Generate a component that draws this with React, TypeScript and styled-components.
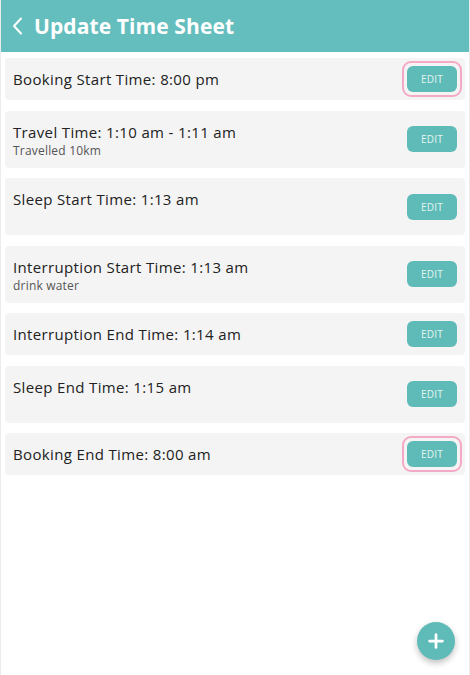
import styled, { createGlobalStyle } from "styled-components"
import { Plus } from "lucide-react"

const GlobalStyle = createGlobalStyle`
    html, body {
        margin: 0;
        padding: 0;
        background: #ffffff;
        font-family: 'Open Sans', 'Liberation Sans', sans-serif;
    }
`

const Screen = styled.div`
    position: relative;
    width: 470px;
    height: 675px;
    box-sizing: border-box;
    border-left: 1px solid #ececec;
    border-right: 1px solid #ececec;
    overflow: hidden;
`

const Header = styled.div`
    display: flex;
    align-items: center;
    gap: 11px;
    height: 52px;
    padding-left: 11px;
    background-color: #64bebd;
    color: #ffffff;
`

const HeaderTitle = styled.h1`
    margin: 0;
    font-size: 21px;
    font-weight: 700;
    letter-spacing: 0.1px;
`

const List = styled.div`
    display: flex;
    flex-direction: column;
    gap: 10.5px;
    padding: 6px 4px 0 4px;
`

const Card = styled.div`
    display: flex;
    align-items: center;
    justify-content: space-between;
    background-color: #f4f4f4;
    border-radius: 4px;
    padding: 8px 4px 8px 8px;
`

const Texts = styled.div`
    display: flex;
    flex-direction: column;
    align-self: flex-start;
    padding: 2px 0;
`

const Title = styled.div`
    font-size: 15px;
    line-height: 22px;
    letter-spacing: 0.35px;
    color: #222222;
`

const Label = styled.span`
    font-weight: 500;
`

const Sub = styled.div`
    font-size: 12px;
    line-height: 15px;
    letter-spacing: 0.2px;
    color: #555555;
    min-height: 15px;
`

const ButtonRing = styled.div<{ $ring: boolean }>`
    display: flex;
    padding: 3px;
    margin: -5px -1px -5px 0;
    border-radius: 9px;
    border: 2px solid ${p => (p.$ring ? "#f4a9c6" : "transparent")};
`

const EditButton = styled.button`
    width: 50px;
    height: 26px;
    border: none;
    border-radius: 6px;
    background-color: #5fbbb7;
    color: #e4f5f3;
    font-family: 'Open Sans', 'Liberation Sans', sans-serif;
    font-size: 10px;
    letter-spacing: 0.2px;
    padding: 0;
    cursor: pointer;
`

const Fab = styled.button`
    position: absolute;
    right: 14px;
    bottom: 15px;
    width: 38px;
    height: 38px;
    border-radius: 50%;
    border: none;
    background-color: #5fbbb7;
    color: #ffffff;
    display: flex;
    align-items: center;
    justify-content: center;
    box-shadow: 0 3px 6px rgba(0, 0, 0, 0.25);
    padding: 0;
`

type Entry = {
    label: string
    value: string
    sub?: string
    tall?: boolean
    ring?: boolean
}

const entries: Entry[] = [
    { label: "Booking Start Time:", value: "8:00 pm", ring: true },
    { label: "Travel Time:", value: "1:10 am - 1:11 am", sub: "Travelled 10km" },
    { label: "Sleep Start Time:", value: "1:13 am", tall: true },
    { label: "Interruption Start Time:", value: "1:13 am", sub: "drink water" },
    { label: "Interruption End Time:", value: "1:14 am" },
    { label: "Sleep End Time:", value: "1:15 am", tall: true },
    { label: "Booking End Time:", value: "8:00 am", ring: true },
]

const App = () => {
    return (
        <Screen>
            <GlobalStyle />
            <Header>
                <svg width="11" height="18" viewBox="0 0 11 18" fill="none">
                    <path d="M9 1.5L2 9l7 7.5" stroke="#ffffff" strokeWidth="2" strokeLinecap="round" strokeLinejoin="round" />
                </svg>
                <HeaderTitle>Update Time Sheet</HeaderTitle>
            </Header>
            <List>
                {entries.map(e => (
                    <Card key={e.label}>
                        <Texts>
                            <Title>
                                <Label>{e.label}</Label> {e.value}
                            </Title>
                            {(e.sub || e.tall) && <Sub>{e.sub}</Sub>}
                        </Texts>
                        <ButtonRing $ring={!!e.ring}>
                            <EditButton>EDIT</EditButton>
                        </ButtonRing>
                    </Card>
                ))}
            </List>
            <Fab>
                <Plus size={22} strokeWidth={3} />
            </Fab>
        </Screen>
    )
}

export default App
